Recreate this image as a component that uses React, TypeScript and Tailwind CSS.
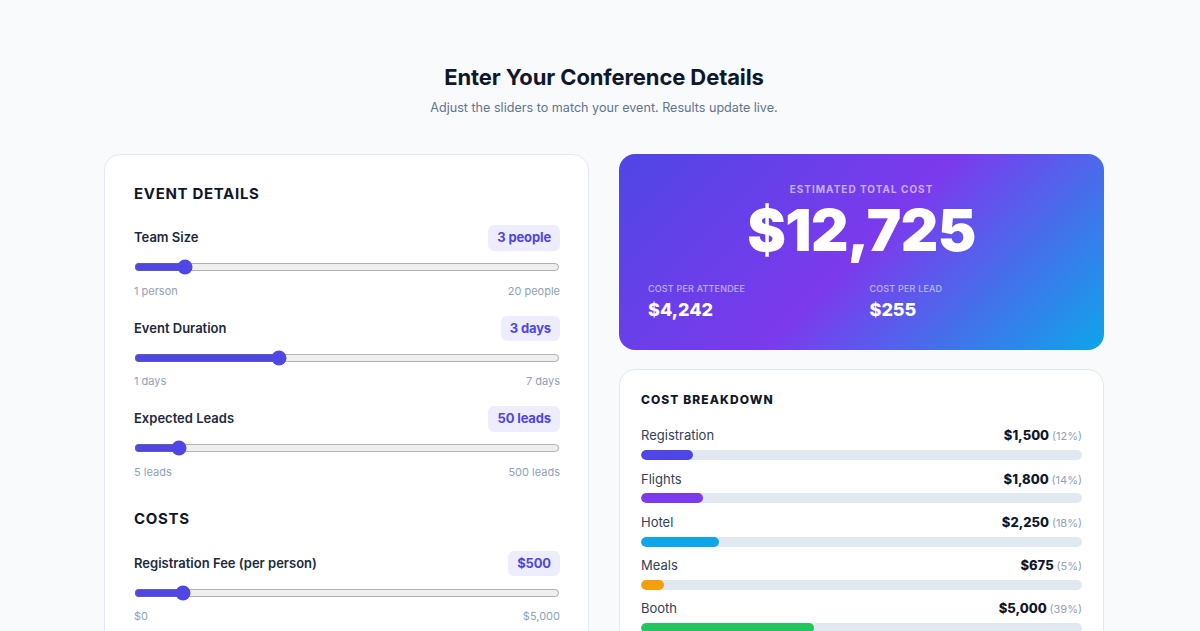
import { useState } from 'react'

type SliderProps = {
  label: string
  value: number
  min: number
  max: number
  step?: number
  format: (v: number) => string
  minLabel: string
  maxLabel: string
  onChange: (v: number) => void
}

function SliderField({ label, value, min, max, step = 1, format, minLabel, maxLabel, onChange }: SliderProps) {
  return (
    <div className="flex flex-col">
      <div className="flex h-6 items-center justify-between">
        <span className="text-[13px] font-semibold text-slate-800">{label}</span>
        <span className="rounded-md bg-[#eeedfd] px-[9px] py-[3px] text-[13px] font-bold tracking-[-0.01em] text-[#4f46e5]">
          {format(value)}
        </span>
      </div>
      <input
        type="range"
        min={min}
        max={max}
        step={step}
        value={value}
        onChange={(e) => onChange(Number(e.target.value))}
        className="mt-[9px] h-4 w-full accent-[#4f46e5]"
      />
      <div className="mt-[7.5px] flex justify-between text-[11px] leading-4 text-slate-400">
        <span>{minLabel}</span>
        <span>{maxLabel}</span>
      </div>
    </div>
  )
}

const fmt = (n: number) => '$' + Math.round(n).toLocaleString('en-US')

export default function App() {
  const [team, setTeam] = useState(3)
  const [days, setDays] = useState(3)
  const [leads, setLeads] = useState(50)
  const [fee, setFee] = useState(500)
  const [flight, setFlight] = useState(600)
  const [hotel, setHotel] = useState(250)
  const [meals, setMeals] = useState(75)
  const [booth, setBooth] = useState(5000)
  const [other, setOther] = useState(1500)

  const nights = Math.max(days, 1)
  const items = [
    { name: 'Registration', amount: fee * team, color: 'bg-[#4f46e5]' },
    { name: 'Flights', amount: flight * team, color: 'bg-[#7c3aed]' },
    { name: 'Hotel', amount: hotel * team * nights, color: 'bg-[#0ea5e9]' },
    { name: 'Meals', amount: meals * team * days, color: 'bg-[#f59e0b]' },
    { name: 'Booth', amount: booth, color: 'bg-[#22c55e]' },
    { name: 'Materials & Swag', amount: other, color: 'bg-[#ec4899]' },
  ]
  const total = items.reduce((s, i) => s + i.amount, 0)

  return (
    <div className="min-h-screen bg-[#f8fafc] pl-2 font-['Inter','Noto_Sans',sans-serif] text-slate-900">
      <div className="mx-auto w-[1000px] pt-[63px] pb-16">
        <h1 className="text-center text-[22px] leading-7 font-bold tracking-[-0.005em] text-[#0f172a]">
          Enter Your Conference Details
        </h1>
        <p className="mt-[7px] text-center text-[12.6px] leading-5 text-slate-500">
          Adjust the sliders to match your event. Results update live.
        </p>

        <div className="mt-[36px] grid grid-cols-2 items-start gap-[30px]">
          <div className="rounded-2xl border border-slate-200 bg-white pt-[27px] pr-[28px] pb-8 pl-[29px]">
            <h2 className="text-[15px] leading-6 font-bold tracking-[0.045em] text-[#0f172a]">EVENT DETAILS</h2>
            <div className="mt-[20px] flex flex-col gap-[18px]">
              <SliderField label="Team Size" value={team} min={1} max={20} format={(v) => `${v} people`} minLabel="1 person" maxLabel="20 people" onChange={setTeam} />
              <SliderField label="Event Duration" value={days} min={1} max={7} format={(v) => `${v} days`} minLabel="1 days" maxLabel="7 days" onChange={setDays} />
              <SliderField label="Expected Leads" value={leads} min={5} max={500} format={(v) => `${v} leads`} minLabel="5 leads" maxLabel="500 leads" onChange={setLeads} />
            </div>

            <h2 className="mt-[27px] text-[15px] leading-6 font-bold tracking-[0.045em] text-[#0f172a]">COSTS</h2>
            <div className="mt-[21px] flex flex-col gap-[18px]">
              <SliderField label="Registration Fee (per person)" value={fee} min={0} max={5000} step={50} format={fmt} minLabel="$0" maxLabel="$5,000" onChange={setFee} />
              <SliderField label="Flight (per person)" value={flight} min={0} max={3000} step={50} format={fmt} minLabel="$0" maxLabel="$3,000" onChange={setFlight} />
              <SliderField label="Hotel (per night)" value={hotel} min={0} max={1000} step={10} format={fmt} minLabel="$0" maxLabel="$1,000" onChange={setHotel} />
              <SliderField label="Meals (per day)" value={meals} min={0} max={300} step={5} format={fmt} minLabel="$0" maxLabel="$300" onChange={setMeals} />
              <SliderField label="Booth & Sponsorship" value={booth} min={0} max={50000} step={500} format={fmt} minLabel="$0" maxLabel="$50,000" onChange={setBooth} />
              <SliderField label="Materials & Swag" value={other} min={0} max={10000} step={100} format={fmt} minLabel="$0" maxLabel="$10,000" onChange={setOther} />
            </div>
          </div>

          <div className="flex flex-col gap-[19px]">
            <div className="rounded-2xl bg-[linear-gradient(135deg,#4f46e5_0%,#7c3aed_50%,#0ea5e9_100%)] px-[29px] pt-[29px] pb-[28px] text-white">
              <p className="text-center text-[10px] leading-3 font-bold tracking-[0.1em] text-white/60">ESTIMATED TOTAL COST</p>
              <p className="mt-[3px] text-center text-[58px] leading-[64px] font-black tracking-[-0.01em]">{fmt(total)}</p>
              <div className="mt-[21px] grid grid-cols-2 gap-4">
                <div>
                  <p className="text-[9px] leading-3 font-medium tracking-[0.02em] text-white/55">COST PER ATTENDEE</p>
                  <p className="mt-[3px] text-[18px] leading-6 font-extrabold">{fmt(total / team)}</p>
                </div>
                <div>
                  <p className="text-[9px] leading-3 font-medium tracking-[0.02em] text-white/55">COST PER LEAD</p>
                  <p className="mt-[3px] text-[18px] leading-6 font-extrabold">{fmt(total / leads)}</p>
                </div>
              </div>
            </div>

            <div className="rounded-2xl border border-slate-200 bg-white px-[21px] pt-[22px] pb-6">
              <h3 className="text-[12px] leading-4 font-extrabold tracking-[0.09em] text-[#0f172a]">COST BREAKDOWN</h3>
              <div className="mt-[18px] flex flex-col gap-[9.25px]">
                {items.map((it) => {
                  const pct = Math.round((it.amount / total) * 100)
                  return (
                    <div key={it.name}>
                      <div className="flex h-5 items-center justify-between">
                        <span className="text-[13px] text-slate-700">{it.name}</span>
                        <span className="text-[13px] font-extrabold text-[#0f172a]">
                          {fmt(it.amount)} <span className="text-[11px] font-normal text-slate-400">({pct}%)</span>
                        </span>
                      </div>
                      <div className="mt-1 h-[10px] w-full overflow-hidden rounded-full bg-[#e2e8f0]">
                        <div className={`h-full rounded-full ${it.color}`} style={{ width: `${(it.amount / total) * 100}%` }} />
                      </div>
                    </div>
                  )
                })}
              </div>
            </div>
          </div>
        </div>
      </div>
    </div>
  )
}
